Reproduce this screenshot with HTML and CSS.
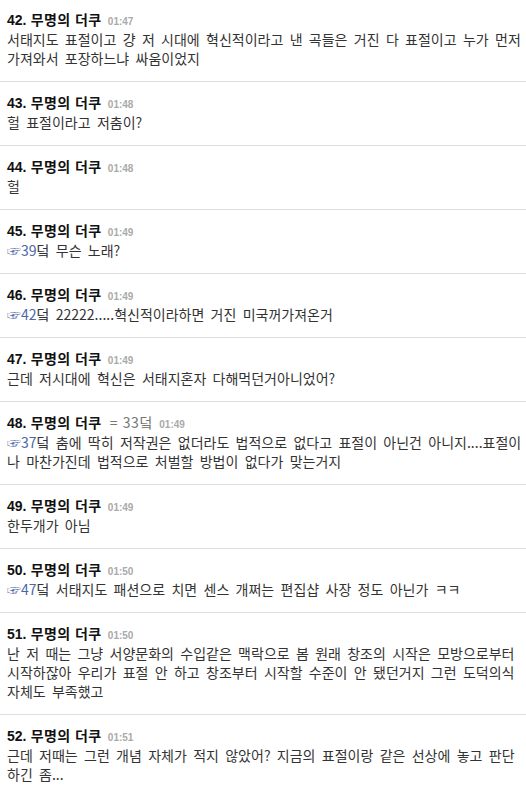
FILE: index.html
```html
<!DOCTYPE html>
<html lang="ko">

<head>
    <meta charset="UTF-8">
    <meta name="viewport" content="width=device-width, initial-scale=1.0">
    <title>댓글</title>
    <link rel="stylesheet" href="styles.css">
</head>

<body>
    <ul class="comments">
        <li class="comment">
            <div class="comment-head"><span class="num">42.</span> 무명의 더쿠 <span class="time">01:47</span></div>
            <div class="comment-body">서태지도 표절이고 걍 저 시대에 혁신적이라고 낸 곡들은 거진 다 표절이고 누가 먼저 가져와서 포장하느냐 싸움이었지</div>
        </li>
        <li class="comment">
            <div class="comment-head"><span class="num">43.</span> 무명의 더쿠 <span class="time">01:48</span></div>
            <div class="comment-body">헐 표절이라고 저춤이?</div>
        </li>
        <li class="comment">
            <div class="comment-head"><span class="num">44.</span> 무명의 더쿠 <span class="time">01:48</span></div>
            <div class="comment-body">헐</div>
        </li>
        <li class="comment">
            <div class="comment-head"><span class="num">45.</span> 무명의 더쿠 <span class="time">01:49</span></div>
            <div class="comment-body"><a class="reply" href="#">☞39</a>덬 무슨 노래?</div>
        </li>
        <li class="comment">
            <div class="comment-head"><span class="num">46.</span> 무명의 더쿠 <span class="time">01:49</span></div>
            <div class="comment-body"><a class="reply" href="#">☞42</a>덬 22222.....혁신적이라하면 거진 미국꺼가져온거</div>
        </li>
        <li class="comment">
            <div class="comment-head"><span class="num">47.</span> 무명의 더쿠 <span class="time">01:49</span></div>
            <div class="comment-body">근데 저시대에 혁신은 서태지혼자 다해먹던거아니었어?</div>
        </li>
        <li class="comment">
            <div class="comment-head"><span class="num">48.</span> 무명의 더쿠 <span class="target">= 33덬</span> <span class="time">01:49</span></div>
            <div class="comment-body"><a class="reply" href="#">☞37</a>덬 춤에 딱히 저작권은 없더라도 법적으로 없다고 표절이 아닌건 아니지....표절이나 마찬가진데 법적으로 처벌할 방법이 없다가 맞는거지</div>
        </li>
        <li class="comment">
            <div class="comment-head"><span class="num">49.</span> 무명의 더쿠 <span class="time">01:49</span></div>
            <div class="comment-body">한두개가 아님</div>
        </li>
        <li class="comment">
            <div class="comment-head"><span class="num">50.</span> 무명의 더쿠 <span class="time">01:50</span></div>
            <div class="comment-body"><a class="reply" href="#">☞47</a>덬 서태지도 패션으로 치면 센스 개쩌는 편집샵 사장 정도 아닌가 ㅋㅋ</div>
        </li>
        <li class="comment">
            <div class="comment-head"><span class="num">51.</span> 무명의 더쿠 <span class="time">01:50</span></div>
            <div class="comment-body">난 저 때는 그냥 서양문화의 수입같은 맥락으로 봄 원래 창조의 시작은 모방으로부터 시작하잖아 우리가 표절 안 하고 창조부터 시작할 수준이 안 됐던거지 그런 도덕의식 자체도 부족했고</div>
        </li>
        <li class="comment">
            <div class="comment-head"><span class="num">52.</span> 무명의 더쿠 <span class="time">01:51</span></div>
            <div class="comment-body">근데 저때는 그런 개념 자체가 적지 않았어? 지금의 표절이랑 같은 선상에 놓고 판단하긴 좀...</div>
        </li>
    </ul>
</body>

</html>
```

FILE: styles.css
```css
body {
    margin: 0;
    padding: 0;
    background-color: #fff;
    color: #333;
    font-family: "Noto Sans CJK KR", "Liberation Sans", sans-serif;
    font-size: 14px;
}

.comments {
    list-style: none;
    margin: 0;
    padding: 0;
}

.comment {
    padding: 10px 2px 13px 7px;
    border-bottom: 1px solid #ddd;
}

.comment:first-child {
    padding-top: 9px;
}

.comment-head {
    line-height: 20px;
    font-weight: bold;
    color: #111;
    letter-spacing: 0.4px;
}

.comment-head .num {
    font-family: "Liberation Sans", sans-serif;
    line-height: 1;
    letter-spacing: 0;
}

.comment-head .target {
    font-weight: normal;
    color: #777;
    margin-left: 4px;
    letter-spacing: 0.6px;
}

.comment-head .time {
    font-family: "Liberation Sans", sans-serif;
    font-size: 10px;
    line-height: 1;
    letter-spacing: 0;
    color: #aaa;
    margin-left: 2px;
}

.comment-body {
    margin-top: 1px;
    line-height: 19px;
    word-spacing: 2.4px;
}

.reply {
    color: #4a67a8;
    text-decoration: none;
}
```
